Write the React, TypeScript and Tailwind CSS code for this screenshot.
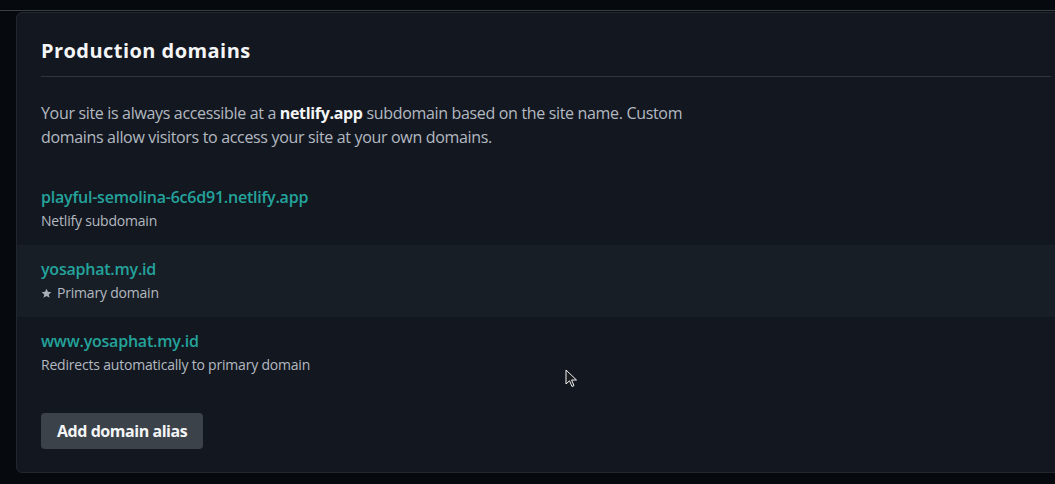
import React from "react";

function Star() {
  return (
    <svg width="11" height="11" viewBox="0 0 24 24" className="shrink-0" aria-hidden="true">
      <path
        fill="#aab0b8"
        d="M12 1.5l3.1 6.9 7.4.7-5.6 5 1.7 7.4L12 17.6l-6.6 3.9 1.7-7.4-5.6-5 7.4-.7z"
      />
    </svg>
  );
}

function Cursor() {
  return (
    <svg
      width="14"
      height="20"
      viewBox="0 0 14 20"
      className="absolute left-[565px] top-[369px]"
      aria-hidden="true"
    >
      <path
        d="M1 1 L1 15 L4.5 11.8 L7 17.5 L9 16.6 L6.6 11 L11.5 11 Z"
        fill="#1b1d20"
        stroke="#f2f2f2"
        strokeWidth="1"
        strokeLinejoin="round"
      />
    </svg>
  );
}

function Row({
  domain,
  label,
  highlight,
  star,
}: {
  domain: string;
  label: string;
  highlight?: boolean;
  star?: boolean;
}) {
  return (
    <div
      className={
        "h-[72px] px-[24px] pt-[12px] " + (highlight ? "bg-[#181e26]" : "")
      }
    >
      <div className="text-[16px] leading-[24px] font-semibold tracking-[-0.22px] text-[#24a39c]">
        {domain}
      </div>
      <div className="mt-[2px] flex items-center gap-[5px] text-[14px] leading-[20px] tracking-[-0.2px] text-[#b3b9c0]">
        {star && <Star />}
        <span>{label}</span>
      </div>
    </div>
  );
}

export default function App() {
  return (
    <div
      className="relative h-[484px] w-full overflow-hidden bg-[#06090d]"
      style={{ fontFamily: "'Open Sans', Lato, sans-serif" }}
    >
      <div className="h-[11px] border-b border-[#3a3f46]" />
      <div className="ml-[16px] mt-[1px] w-[1060px] h-[461px] rounded-[6px] border border-[#22272e] bg-[#131820]">
        <div className="px-[24px] pt-[24px]">
          <h2 className="pb-[11px] border-b border-[#30353c] text-[20px] leading-[28px] font-bold tracking-[0.45px] text-[#f4f5f6]">
            Production domains
          </h2>
          <p className="mt-[24px] max-w-[670px] text-[16px] leading-[24px] tracking-[-0.33px] text-[#b3b9c0]">
            Your site is always accessible at a{" "}
            <strong className="font-bold text-[#f4f5f6]">netlify.app</strong>{" "}
            subdomain based on the site name. Custom domains allow visitors to
            access your site at your own domains.
          </p>
        </div>
        <div className="mt-[24px]">
          <Row domain="playful-semolina-6c6d91.netlify.app" label="Netlify subdomain" />
          <Row domain="yosaphat.my.id" label="Primary domain" highlight star />
          <Row domain="www.yosaphat.my.id" label="Redirects automatically to primary domain" />
        </div>
        <div className="px-[24px] mt-[24px]">
          <button className="h-[36px] px-[16px] rounded-[4px] bg-[#3b424a] text-[16px] font-bold tracking-[-0.45px] text-[#f4f5f6]">
            Add domain alias
          </button>
        </div>
      </div>
      <Cursor />
    </div>
  );
}
